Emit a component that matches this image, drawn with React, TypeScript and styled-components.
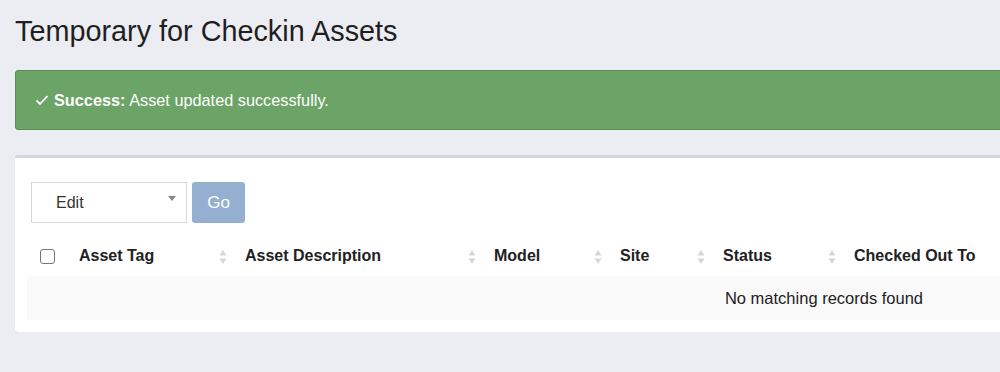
import styled, { createGlobalStyle } from "styled-components";

const GlobalStyle = createGlobalStyle`
  html, body {
    margin: 0;
    padding: 0;
    background: #ecedf3;
    overflow: hidden;
    font-family: "Liberation Sans", Arial, sans-serif;
    color: #222;
  }
`;

const columns = [
  { label: "Asset Tag", width: 166 },
  { label: "Asset Description", width: 249 },
  { label: "Model", width: 126 },
  { label: "Site", width: 103 },
  { label: "Status", width: 131 },
  { label: "Checked Out To", width: 779 },
];

export default function App() {
  return (
    <Page>
      <GlobalStyle />
      <Title>Temporary for Checkin Assets</Title>
      <Alert>
        <Check viewBox="0 0 14 14">
          <path d="M1.5 7.5 L5 11 L12.5 3" />
        </Check>
        <strong>Success:</strong> Asset updated successfully.
      </Alert>
      <Box>
        <Toolbar>
          <Select>
            <span>Edit</span>
            <Caret />
          </Select>
          <GoButton>Go</GoButton>
        </Toolbar>
        <Table>
          <thead>
            <tr>
              <CheckCell>
                <CheckBox />
              </CheckCell>
              {columns.map((c) => (
                <HeadCell key={c.label} $w={c.width}>
                  <HeadInner>
                    {c.label}
                    <SortIcon viewBox="0 0 8 16">
                      <path d="M4 1 L7.5 6.5 H0.5 Z" />
                      <path d="M4 15 L7.5 9.5 H0.5 Z" />
                    </SortIcon>
                  </HeadInner>
                </HeadCell>
              ))}
            </tr>
          </thead>
          <tbody>
            <EmptyRow>
              <td colSpan={7}>No matching records found</td>
            </EmptyRow>
          </tbody>
        </Table>
      </Box>
    </Page>
  );
}

const Page = styled.div`
  width: 1648px;
  padding: 15px 15px 0 15px;
  box-sizing: border-box;
`;

const Title = styled.h1`
  margin: 0;
  padding-top: 0;
  font-size: 28.8px;
  font-weight: 400;
  line-height: 33px;
  color: #1f1f1f;
`;

const Alert = styled.div`
  margin-top: 22px;
  height: 60px;
  box-sizing: border-box;
  display: flex;
  align-items: center;
  padding: 0 19px;
  background: #6ba466;
  border: 1px solid #5a8e56;
  border-radius: 3px;
  color: #fff;
  font-size: 16.3px;
  white-space: pre;

  strong {
    font-weight: 700;
  }
`;

const Check = styled.svg`
  width: 14px;
  height: 14px;
  margin-right: 5px;
  fill: none;
  stroke: #fff;
  stroke-width: 1.8;
`;

const Box = styled.div`
  margin-top: 25px;
  background: #fff;
  border-top: 3px solid #d2d6de;
  border-radius: 3px;
  box-shadow: 0 1px 1px rgba(0, 0, 0, 0.1);
  padding: 24px 12px 12px 12px;
`;

const Toolbar = styled.div`
  display: flex;
  gap: 5px;
  margin-left: 4px;
`;

const Select = styled.div`
  width: 156px;
  height: 41px;
  box-sizing: border-box;
  border: 1px solid #d2d6de;
  display: flex;
  align-items: center;
  justify-content: space-between;
  padding: 0 10px 0 24px;
  font-size: 16px;
  color: #333;
`;

const Caret = styled.span`
  width: 0;
  height: 0;
  border-left: 4px solid transparent;
  border-right: 4px solid transparent;
  border-top: 5px solid #888;
  margin-top: -8px;
`;

const GoButton = styled.button`
  width: 53px;
  height: 41px;
  border: none;
  border-radius: 3px;
  background: #94afd0;
  color: #fff;
  font-family: "Liberation Sans", Arial, sans-serif;
  font-size: 17px;
  padding: 0;
`;

const Table = styled.table`
  width: 100%;
  margin-top: 17px;
  border-collapse: collapse;
  table-layout: fixed;
`;

const CheckCell = styled.th`
  width: 40px;
  height: 36px;
  padding: 0 0 4px 13px;
  box-sizing: border-box;
  text-align: left;
  vertical-align: middle;
`;

const CheckBox = styled.span`
  display: block;
  width: 13px;
  height: 13px;
  border: 1px solid #767676;
  border-radius: 3px;
`;

const HeadCell = styled.th<{ $w: number }>`
  width: ${(p) => p.$w}px;
  padding: 0 6px 4px 12px;
  box-sizing: border-box;
  text-align: left;
  font-size: 16px;
  font-weight: 700;
  color: #222;
`;

const HeadInner = styled.div`
  display: flex;
  align-items: center;
  justify-content: space-between;
`;

const SortIcon = styled.svg`
  width: 8px;
  height: 16px;
  fill: #d6d6d6;
  flex-shrink: 0;
  margin-top: 1px;
`;

const EmptyRow = styled.tr`
  background: #f9f9f9;

  td {
    height: 44px;
    padding: 0;
    text-align: center;
    font-size: 16.5px;
    color: #222;
  }
`;
